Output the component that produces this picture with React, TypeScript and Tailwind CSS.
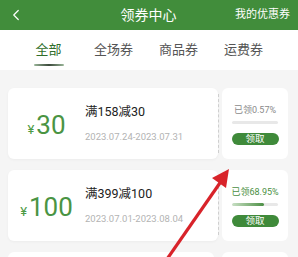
import { ChevronLeft } from 'lucide-react';

const TABS = ['全部', '全场券', '商品券', '运费券'];

const COUPONS = [
  { amount: '30', title: '满158减30', date: '2023.07.24-2023.07.31', pct: 0.57, label: '已领0.57%' },
  { amount: '100', title: '满399减100', date: '2023.07.01-2023.08.04', pct: 68.95, label: '已领68.95%' },
];

function Coupon({ c }: { c: (typeof COUPONS)[number] }) {
  const hot = c.pct > 10;
  return (
    <div className="flex h-[71px] w-full">
      <div className="flex flex-1 items-center rounded-md bg-white shadow-[0_1px_3px_rgba(0,0,0,0.04)]">
        <div className="flex w-[77px] items-baseline justify-center pt-1">
          <span className="text-[13px] text-[#4c9a45]">¥</span>
          <span className="ml-[2px] text-[26px] leading-none text-[#4a9443]">{c.amount}</span>
        </div>
        <div className="flex flex-col">
          <span className="text-[12.5px] leading-none text-[#222]">{c.title}</span>
          <span className="mt-[13px] text-[9.5px] leading-none text-[#b3b3b3]">{c.date}</span>
        </div>
      </div>
      <div className="my-[6px] border-l border-dashed border-[#cfcfcf]" />
      <div className="ml-[3px] flex w-[66px] flex-col items-center rounded-md bg-white pt-[18px]">
        <span className={'text-[9px] leading-none ' + (hot ? 'text-[#4a8f44]' : 'text-[#8a8a8a]')}>{c.label}</span>
        <div className="mt-[6px] h-[3px] w-[46px] overflow-hidden rounded-full bg-[#e8e8e8]">
          <div
            className="h-full rounded-full bg-gradient-to-r from-[#c9e0c5] to-[#4b8f44]"
            style={{ width: `${c.pct}%` }}
          />
        </div>
        <div className="mt-[9px] flex h-[12px] w-[47px] items-center justify-center rounded-full bg-[#3f8a3a] text-[9.5px] leading-none text-white">
          领取
        </div>
      </div>
    </div>
  );
}

export default function App() {
  return (
    <div className="relative h-[257px] w-[298px] overflow-hidden bg-[#f5f5f5] font-['Roboto','Noto_Sans_CJK_SC',sans-serif]">
      <div className="flex h-[30px] items-center justify-between bg-[#418d3b] pl-[7px] pr-[8px] text-white">
        <div className="flex w-[60px] justify-start">
          <ChevronLeft size={18} strokeWidth={1.6} />
        </div>
        <span className="text-[14px]">领券中心</span>
        <span className="flex w-[60px] justify-end text-[11px]">我的优惠券</span>
      </div>
      <div className="flex h-[40px] items-center bg-white pl-[16px]">
        {TABS.map((t, i) => (
          <div key={t} className="relative flex w-[65px] flex-col items-center">
            <span className={'text-[13px] ' + (i === 0 ? 'text-[#2f6e2b]' : 'text-[#555]')}>{t}</span>
            {i === 0 && (
              <span className="absolute top-[24px] h-[2px] w-[30px] rounded-full bg-gradient-to-r from-[#9bb79a] via-[#3c4a3c] to-[#9bb79a]" />
            )}
          </div>
        ))}
      </div>
      <div className="flex flex-col gap-[11px] pl-[8px] pr-[10px] pt-[18px]">
        {COUPONS.map((c) => (
          <Coupon key={c.amount} c={c} />
        ))}
        <div className="flex h-[71px] w-full">
          <div className="flex-1 rounded-md bg-white" />
          <div className="ml-[8px] w-[66px] rounded-md bg-white" />
        </div>
      </div>
      <svg className="absolute left-0 top-0" width="298" height="257" viewBox="0 0 298 257">
        <line x1="165" y1="262" x2="222" y2="180" stroke="#d8232a" strokeWidth="3.2" strokeLinecap="round" />
        <polygon points="229,169 226,188 212,178" fill="#d8232a" />
      </svg>
    </div>
  );
}
